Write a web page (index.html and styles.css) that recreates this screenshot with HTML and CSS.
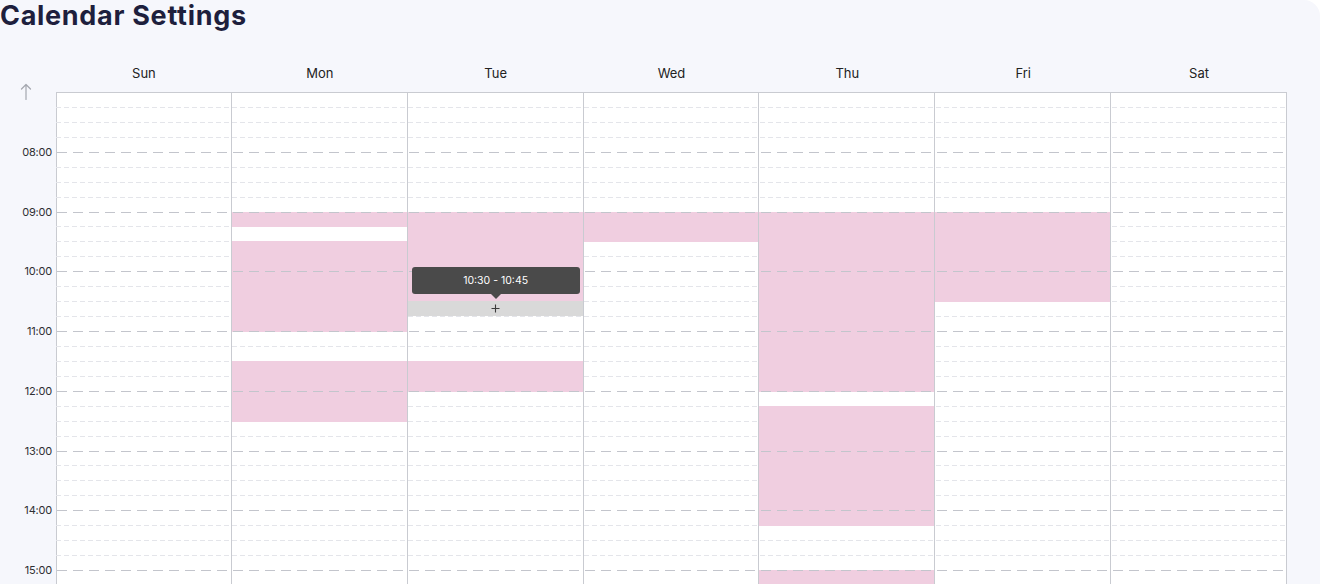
FILE: index.html
```html
<!DOCTYPE html>
<html lang="en">
<head>
<meta charset="utf-8">
<title>Calendar Settings</title>
<link rel="stylesheet" href="styles.css">
</head>
<body>
<main class="card">
  <h1 class="title">Calendar Settings</h1>

  <div class="cal-head">
    <div class="head-gutter"></div>
    <div class="day-name">Sun</div>
    <div class="day-name">Mon</div>
    <div class="day-name">Tue</div>
    <div class="day-name">Wed</div>
    <div class="day-name">Thu</div>
    <div class="day-name">Fri</div>
    <div class="day-name">Sat</div>
  </div>

  <div class="cal-body">
    <div class="gutter">
      <svg class="up-arrow" width="12" height="17" viewBox="0 0 12 17" aria-hidden="true">
        <path d="M6 1.5V16.5M1.5 6L6 1.5L10.5 6" fill="none" stroke="#a4a7af" stroke-width="1.2" stroke-linecap="round" stroke-linejoin="round"/>
      </svg>
      <span class="hour-label" style="grid-row: 4 / 6">08:00</span>
      <span class="hour-label" style="grid-row: 8 / 10">09:00</span>
      <span class="hour-label" style="grid-row: 12 / 14">10:00</span>
      <span class="hour-label" style="grid-row: 16 / 18">11:00</span>
      <span class="hour-label" style="grid-row: 20 / 22">12:00</span>
      <span class="hour-label" style="grid-row: 24 / 26">13:00</span>
      <span class="hour-label" style="grid-row: 28 / 30">14:00</span>
      <span class="hour-label" style="grid-row: 32 / 34">15:00</span>
    </div>

    <div class="grid">
      <!-- quarter-hour guide lines (under events) -->
      <div class="slots">
        <div class="slot top"></div><div class="slot q"></div><div class="slot q"></div><div class="slot q"></div>
        <div class="slot"></div><div class="slot q"></div><div class="slot q"></div><div class="slot q"></div>
        <div class="slot"></div><div class="slot q"></div><div class="slot q"></div><div class="slot q"></div>
        <div class="slot"></div><div class="slot q"></div><div class="slot q"></div><div class="slot q"></div>
        <div class="slot"></div><div class="slot q"></div><div class="slot q"></div><div class="slot q"></div>
        <div class="slot"></div><div class="slot q"></div><div class="slot q"></div><div class="slot q"></div>
        <div class="slot"></div><div class="slot q"></div><div class="slot q"></div><div class="slot q"></div>
        <div class="slot"></div><div class="slot q"></div><div class="slot q"></div><div class="slot q"></div>
        <div class="slot"></div><div class="slot q"></div><div class="slot q"></div><div class="slot q"></div>
      </div>

      <!-- day columns -->
      <div class="day sun"></div>
      <div class="day mon">
        <div class="busy" style="grid-row: 9 / 10"></div>
        <div class="busy" style="grid-row: 11 / 17"></div>
        <div class="busy" style="grid-row: 19 / 23"></div>
      </div>
      <div class="day tue">
        <div class="busy" style="grid-row: 9 / 15"></div>
        <div class="hover-slot" style="grid-row: 15 / 16">
          <div class="tooltip">10:30 - 10:45</div>
          <svg class="plus" width="9" height="9" viewBox="0 0 9 9" aria-hidden="true">
            <path d="M4.5 0.5V8.5M0.5 4.5H8.5" stroke="#3c3c3c" stroke-width="1.1"/>
          </svg>
        </div>
        <div class="busy" style="grid-row: 19 / 21"></div>
      </div>
      <div class="day wed">
        <div class="busy" style="grid-row: 9 / 11"></div>
      </div>
      <div class="day thu">
        <div class="busy" style="grid-row: 9 / 21"></div>
        <div class="busy" style="grid-row: 22 / 30"></div>
        <div class="busy" style="grid-row: 33 / 37"></div>
      </div>
      <div class="day fri">
        <div class="busy" style="grid-row: 9 / 15"></div>
      </div>
      <div class="day sat"></div>

      <!-- hour lines (over events) -->
      <div class="hours">
        <div class="hslot"></div><div class="hslot"></div><div class="hslot"></div><div class="hslot"></div>
        <div class="hslot h"></div><div class="hslot"></div><div class="hslot"></div><div class="hslot"></div>
        <div class="hslot h"></div><div class="hslot"></div><div class="hslot"></div><div class="hslot"></div>
        <div class="hslot h"></div><div class="hslot"></div><div class="hslot"></div><div class="hslot"></div>
        <div class="hslot h"></div><div class="hslot"></div><div class="hslot"></div><div class="hslot"></div>
        <div class="hslot h"></div><div class="hslot"></div><div class="hslot"></div><div class="hslot"></div>
        <div class="hslot h"></div><div class="hslot"></div><div class="hslot"></div><div class="hslot"></div>
        <div class="hslot h"></div><div class="hslot"></div><div class="hslot"></div><div class="hslot"></div>
        <div class="hslot h"></div><div class="hslot"></div><div class="hslot"></div><div class="hslot"></div>
      </div>
    </div>
  </div>
</main>
</body>
</html>
```

FILE: styles.css
```css
:root {
  --slot: 14.9375px;
  --rows: 36;
  --line: #c9cbd1;
}

* { box-sizing: border-box; }

html, body {
  margin: 0;
  background: #ffffff;
}

body {
  font-family: Inter, "Noto Sans", "Liberation Sans", sans-serif;
  color: #222;
}

.card {
  width: 1320px;
  height: 584px;
  overflow: hidden;
  background: #f6f7fc;
  border-top-right-radius: 16px;
  padding-right: 33px;
}

.title {
  margin: 0;
  font-size: 27px;
  line-height: 32px;
  font-weight: 700;
  color: #1e1f3d;
  letter-spacing: 0.7px;
}

.cal-head {
  display: grid;
  grid-template-columns: 56px repeat(7, 1fr);
  height: 32px;
  margin-top: 25px;
  align-items: center;
}

.day-name {
  text-align: center;
  font-size: 13px;
  color: #222;
}

.cal-body {
  display: grid;
  grid-template-columns: 56px 1fr;
  margin-top: 3px;
}

.gutter {
  display: grid;
  grid-template-rows: repeat(var(--rows), var(--slot));
  grid-template-columns: 1fr;
}

.up-arrow {
  grid-row: 1;
  grid-column: 1;
  justify-self: start;
  align-self: start;
  margin-left: 20px;
  margin-top: -9px;
}

.hour-label {
  grid-column: 1;
  align-self: center;
  justify-self: end;
  padding-right: 4px;
  font-size: 11px;
  line-height: 14px;
  color: #2f2f33;
  letter-spacing: -0.2px;
}

.grid {
  position: relative;
  isolation: isolate;
  display: grid;
  grid-template-columns: repeat(7, 1fr);
  grid-template-rows: repeat(var(--rows), var(--slot));
  background: #ffffff;
}

.slots,
.hours {
  grid-column: 1 / -1;
  grid-row: 1 / -1;
  display: flex;
  flex-direction: column;
}

.slots { z-index: 0; }
.hours { z-index: 2; pointer-events: none; }

.slot,
.hslot {
  height: var(--slot);
  flex: none;
}

.slot.q::before,
.slot.top::before,
.hslot.h::before {
  content: "";
  display: block;
  height: 1px;
}

.slot.q::before {
  background: repeating-linear-gradient(to right, #e4e5ea 0 5px, transparent 5px 8px);
}

.slot.top::before {
  background: var(--line);
}

.hslot.h::before {
  margin-left: 1px;
  background: repeating-linear-gradient(to right, #c3c5cc 0 10px, transparent 10px 16px);
}

.day {
  grid-row: 1 / -1;
  display: grid;
  grid-template-rows: repeat(var(--rows), var(--slot));
  grid-template-columns: 1fr;
  border-right: 1px solid var(--line);
}

.day.sun { grid-column: 1; border-left: 1px solid var(--line); }
.day.mon { grid-column: 2; }
.day.tue { grid-column: 3; }
.day.wed { grid-column: 4; }
.day.thu { grid-column: 5; }
.day.fri { grid-column: 6; }
.day.sat { grid-column: 7; }

.busy {
  grid-column: 1;
  margin-bottom: -1px;
  background: #f0cee0;
  z-index: 1;
}

.hover-slot {
  grid-column: 1;
  position: relative;
  z-index: 3;
  background: #d9d9d9;
  display: flex;
  align-items: center;
  justify-content: center;
}

.tooltip {
  position: absolute;
  left: 4px;
  right: 3px;
  bottom: calc(100% + 7px);
  height: 27px;
  border-radius: 3px;
  background: #4a4a4a;
  color: #ffffff;
  font-size: 10.5px;
  display: flex;
  align-items: center;
  justify-content: center;
}

.tooltip::after {
  content: "";
  position: absolute;
  left: 50%;
  top: 100%;
  margin-left: -5px;
  border-left: 5px solid transparent;
  border-right: 5px solid transparent;
  border-top: 5px solid #4a4a4a;
}
```
